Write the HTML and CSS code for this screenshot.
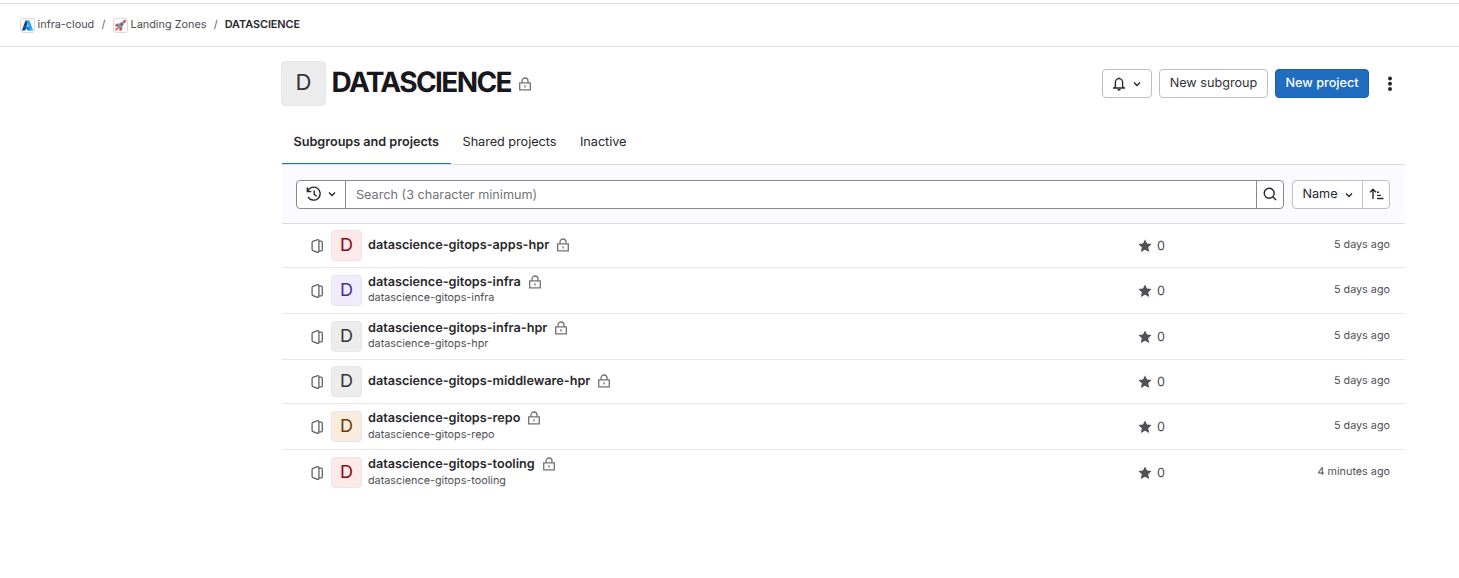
FILE: index.html
```html
<!DOCTYPE html>
<html lang="en">
<head>
<meta charset="utf-8">
<title>DATASCIENCE</title>
<link rel="stylesheet" href="styles.css">
</head>
<body>
<svg class="sprite" aria-hidden="true">
  <symbol id="lock" viewBox="0 0 14 14"><path d="M1.7 5.9h10.6v7H1.7zM4 5.8V4a3 3 0 0 1 6 0v1.8M7 8.3v2.3"/></symbol>
  <symbol id="chevron" viewBox="0 0 10 10"><path d="M2 3.5l3 3 3-3"/></symbol>
  <symbol id="book" viewBox="0 0 14 14"><path d="M6.2 1.2L2.9 2.4q-.8.3-.8 1.1v7q0 .8.8 1.1l3.3 1.2M6.2 1.2Q8.9.1 8.9 1.4v11.2q0 1.3-2.7.2M11 2.1q1.3 0 1.3 1.2v7.4q0 1.2-1.3 1.2M9 2.1h2M9 11.9h2"/></symbol>
  <symbol id="star" viewBox="0 0 14 14"><path d="M7 .4l2 4.2 4.6.5-3.4 3.2 1 4.7L7 10.7 2.8 13l1-4.7L.4 5.1 5 4.6z"/></symbol>
</svg>
<header class="topbar">
  <nav class="crumbs">
    <a class="crumb"><svg class="crumb-icon" viewBox="0 0 14 14"><path fill="#114a8b" d="M4.8 1.5h3.4L4.6 12.5H.9z"/><path fill="#1478cf" d="M3.8 8.2h5.6l1.2 4.3H7.3z"/><path fill="#2fa8ec" d="M5.8 1.5h3.4l3.9 11H9.4z"/></svg>infra-cloud</a>
    <span class="slash">/</span>
    <a class="crumb"><svg class="crumb-icon" viewBox="0 0 14 14"><path fill="#d9433f" d="M5.4 4.6L2 5.6 1 8.2l3.5-.4zM9.3 8.6L8.4 12l-2.6 1 .4-3.6z"/><path fill="#f7a928" d="M3.8 8.4L1 13l4.4-2.8z"/><path fill="#ef5b35" d="M3.2 9.2L1.4 11l.4 1.6 3-2.2z"/><path fill="#7f98a8" d="M11.4 2.2Q6.1 3.1 3.2 8.3l2.5 2.5Q10.9 7.8 11.4 2.2z"/><path fill="#d9433f" d="M13 .9L9.2 1.9l2.9 3z"/><circle cx="8.2" cy="5.7" r="1.2" fill="#2c5aa8"/></svg>Landing Zones</a>
    <span class="slash">/</span>
    <b class="current">DATASCIENCE</b>
  </nav>
</header>
<main class="page">
  <section class="heading">
    <div class="group-avatar">D</div>
    <h1 class="title">DATASCIENCE</h1>
    <svg class="icon lock title-lock"><use href="#lock"/></svg>
    <div class="actions">
      <button class="btn bell"><svg class="icon bell-icon" viewBox="0 0 14 14"><path d="M1 11h12M2.5 11l.9-1.7V5.2a3.6 3.6 0 0 1 7.2 0v4.1l.9 1.7M7 .4v1.2M5.5 12.7h3"/></svg><svg class="icon chevron"><use href="#chevron"/></svg></button>
      <button class="btn subgroup">New subgroup</button>
      <button class="btn primary">New project</button>
      <svg class="more" viewBox="0 0 6 16"><circle cx="3" cy="2.4" r="2"/><circle cx="3" cy="7.7" r="2"/><circle cx="3" cy="13" r="2"/></svg>
    </div>
  </section>
  <nav class="tabs">
    <a class="tab active">Subgroups and projects</a>
    <a class="tab">Shared projects</a>
    <a class="tab">Inactive</a>
  </nav>
  <section class="filters">
    <div class="search">
      <div class="history"><svg class="icon history-icon" viewBox="0 0 16 16"><path d="M1.3 1.5v4h4M1.6 5.3A6.5 6.5 0 1 1 2 10.8M8.2 4.5v4l2.4 1.6"/></svg><svg class="icon chevron"><use href="#chevron"/></svg></div>
      <div class="query">Search (3 character minimum)</div>
      <div class="go"><svg class="icon search-icon" viewBox="0 0 14 14"><circle cx="6.2" cy="6.2" r="5"/><path d="M9.9 9.9l3.2 3.2"/></svg></div>
    </div>
    <div class="sort">
      <div class="sort-name"><span class="sort-label">Name</span><svg class="icon chevron"><use href="#chevron"/></svg></div>
      <div class="sort-dir"><svg class="icon sort-icon" viewBox="0 0 15 14"><path d="M4 12V2.5M1 5.2l3-3 3 3M8 5.3h2M8 8.4h4M8 11.5h6.5"/></svg></div>
    </div>
  </section>
  <ul class="list">
    <li class="row"><svg class="icon project"><use href="#book"/></svg><div class="avatar red">D</div><div class="info"><div class="name">datascience-gitops-apps-hpr<svg class="icon lock"><use href="#lock"/></svg></div></div><div class="stars"><svg class="star"><use href="#star"/></svg>0</div><time class="when">5 days ago</time></li>
    <li class="row tall"><svg class="icon project"><use href="#book"/></svg><div class="avatar purple">D</div><div class="info"><div class="name">datascience-gitops-infra<svg class="icon lock"><use href="#lock"/></svg></div><div class="desc">datascience-gitops-infra</div></div><div class="stars"><svg class="star"><use href="#star"/></svg>0</div><time class="when">5 days ago</time></li>
    <li class="row tall"><svg class="icon project"><use href="#book"/></svg><div class="avatar gray">D</div><div class="info"><div class="name">datascience-gitops-infra-hpr<svg class="icon lock"><use href="#lock"/></svg></div><div class="desc">datascience-gitops-hpr</div></div><div class="stars"><svg class="star"><use href="#star"/></svg>0</div><time class="when">5 days ago</time></li>
    <li class="row"><svg class="icon project"><use href="#book"/></svg><div class="avatar gray">D</div><div class="info"><div class="name">datascience-gitops-middleware-hpr<svg class="icon lock"><use href="#lock"/></svg></div></div><div class="stars"><svg class="star"><use href="#star"/></svg>0</div><time class="when">5 days ago</time></li>
    <li class="row tall spaced"><svg class="icon project"><use href="#book"/></svg><div class="avatar orange">D</div><div class="info"><div class="name">datascience-gitops-repo<svg class="icon lock"><use href="#lock"/></svg></div><div class="desc">datascience-gitops-repo</div></div><div class="stars"><svg class="star"><use href="#star"/></svg>0</div><time class="when">5 days ago</time></li>
    <li class="row tall spaced"><svg class="icon project"><use href="#book"/></svg><div class="avatar red">D</div><div class="info"><div class="name">datascience-gitops-tooling<svg class="icon lock"><use href="#lock"/></svg></div><div class="desc">datascience-gitops-tooling</div></div><div class="stars"><svg class="star"><use href="#star"/></svg>0</div><time class="when">4 minutes ago</time></li>
  </ul>
</main>
</body>
</html>
```
FILE: styles.css
```css
* { box-sizing: border-box; }
body { margin: 0; padding-top: 3px; background: #fff; color: #28272d; font: 12.67px/18px Inter, "Liberation Sans", sans-serif; text-rendering: geometricPrecision; }
.sprite { display: none; }
.icon { flex: none; fill: none; stroke: #28272d; stroke-width: 1.4; }
.topbar { height: 44px; border-top: 1px solid #dcdcde; border-bottom: 1px solid #dcdcde; padding: 0 19.6px; }
.crumbs { display: flex; align-items: center; height: 40px; font-size: 10.86px; color: #4c4b51; white-space: nowrap; }
.crumb { display: flex; align-items: center; gap: 3px; }
.crumb-icon { width: 15px; height: 15px; border: 1px solid #dcdcde; border-radius: 3px; margin-top: 2px; }
.slash { width: 18.3px; text-align: center; color: #626168; }
.current { font-weight: 600; color: #28272d; letter-spacing: -0.05px; }
.page { width: 1123px; margin-left: 282px; }
.heading { display: flex; align-items: flex-start; height: 73px; padding-top: 14px; }
.group-avatar { width: 45px; height: 45px; margin-left: -1px; border-radius: 4px; background: #ececec; border: 1px solid #e6e6e6; color: #333238; font-size: 22px; line-height: 43px; text-align: center; }
.title { margin: 0 0 0 5.5px; font-size: 28px; line-height: 43px; font-weight: 700; letter-spacing: -1.6px; color: #18171d; }
.lock { width: 14px; height: 14px; stroke: #737278; stroke-width: 1.3; }
.title-lock { margin: 16px 0 0 7px; }
.actions { display: flex; align-items: center; margin: 8px 12px 0 auto; height: 29px; }
.btn { height: 29px; margin: 0 7px 0 0; padding: 0; display: flex; align-items: center; justify-content: center; background: #fff; border: 1px solid #bfbfc3; border-radius: 4px; font: 12.67px/17px Inter, "Liberation Sans", sans-serif; text-rendering: geometricPrecision; color: #333238; }
.bell { width: 50px; gap: 6px; }
.bell-icon { width: 14px; height: 14px; }
.chevron { width: 10px; height: 10px; }
.subgroup { width: 109px; }
.primary { width: 94px; margin-right: 18px; background: #1f6cc0; border-color: #1a5fac; color: #fff; font-weight: 500; }
.more { width: 6px; height: 16px; fill: #28272d; }
.tabs { display: flex; height: 45px; border-bottom: 1px solid #dcdcde; }
.tab { height: 44px; padding: 14px 12px 0 11.5px; line-height: 18px; color: #28272d; letter-spacing: -0.02px; }
.active { font-weight: 600; border-bottom: 1px solid #1f75cb; }
.filters { display: flex; height: 59px; padding: 15px 15px 0 14px; background: #fafaff; border-bottom: 1px solid #dcdcde; }
.search { display: flex; width: 988px; height: 29px; border: 1px solid #89888d; border-radius: 4px; background: #fff; }
.history { display: flex; width: 49px; align-items: center; justify-content: center; gap: 5px; border-right: 1px solid #89888d; }
.history-icon { width: 16px; height: 16px; margin-top: -1px; }
.history .chevron { margin-top: -1px; }
.query { flex: 1; padding-left: 10px; line-height: 29px; color: #737278; }
.go { display: flex; width: 27px; align-items: center; justify-content: center; border-left: 1px solid #89888d; }
.search-icon { width: 14px; height: 14px; margin-top: -1px; }
.sort { display: flex; width: 98px; height: 29px; margin-left: 8px; border: 1px solid #bfbfc3; border-radius: 4px; background: #fff; }
.sort-name { display: flex; width: 70px; align-items: center; justify-content: center; gap: 6px; padding-left: 1px; border-right: 1px solid #bfbfc3; }
.sort-label { line-height: 19px; }
.sort-dir { display: flex; flex: 1; align-items: center; justify-content: center; }
.sort-icon { width: 15px; height: 14px; margin-top: -1px; }
.list { margin: 0; padding: 0; list-style: none; }
.row { display: flex; height: 44px; padding: 6px 15px 0 28px; border-bottom: 1px solid #e7e7e9; }
.tall { height: 46px; padding-top: 7px; }
.row:last-child { border-bottom: 0; }
.project { width: 14px; height: 14px; margin-top: 9px; stroke: #626168; stroke-width: 1.3; }
.avatar { width: 31px; height: 31px; margin: 0 6px 0 7px; border: 1px solid #e8e6ea; border-radius: 4px; font-size: 18px; line-height: 29px; text-align: center; }
.red { background: #fde9e8; color: #8b0619; }
.purple { background: #f0ecfb; color: #41319b; }
.gray { background: #ececec; color: #333238; }
.orange { background: #f9ecdc; color: #703800; }
.info { flex: 1; padding-top: 7px; }
.tall .info { padding-top: 0; margin-top: -1px; }
.name { display: flex; align-items: center; gap: 7px; height: 18px; font-weight: 600; color: #28272d; }
.name .lock { margin-top: -2px; }
.desc { height: 14px; margin-top: -1px; font-size: 10.8px; line-height: 14px; color: #535158; }
.spaced .desc { margin-top: 0; }
.stars { display: flex; align-items: center; gap: 5px; width: 112px; height: 33px; color: #4c4b51; }
.star { width: 14px; height: 14px; margin-top: -2px; fill: #535158; }
.when { width: 140px; text-align: right; font-size: 10.8px; line-height: 29px; color: #535158; }
```
